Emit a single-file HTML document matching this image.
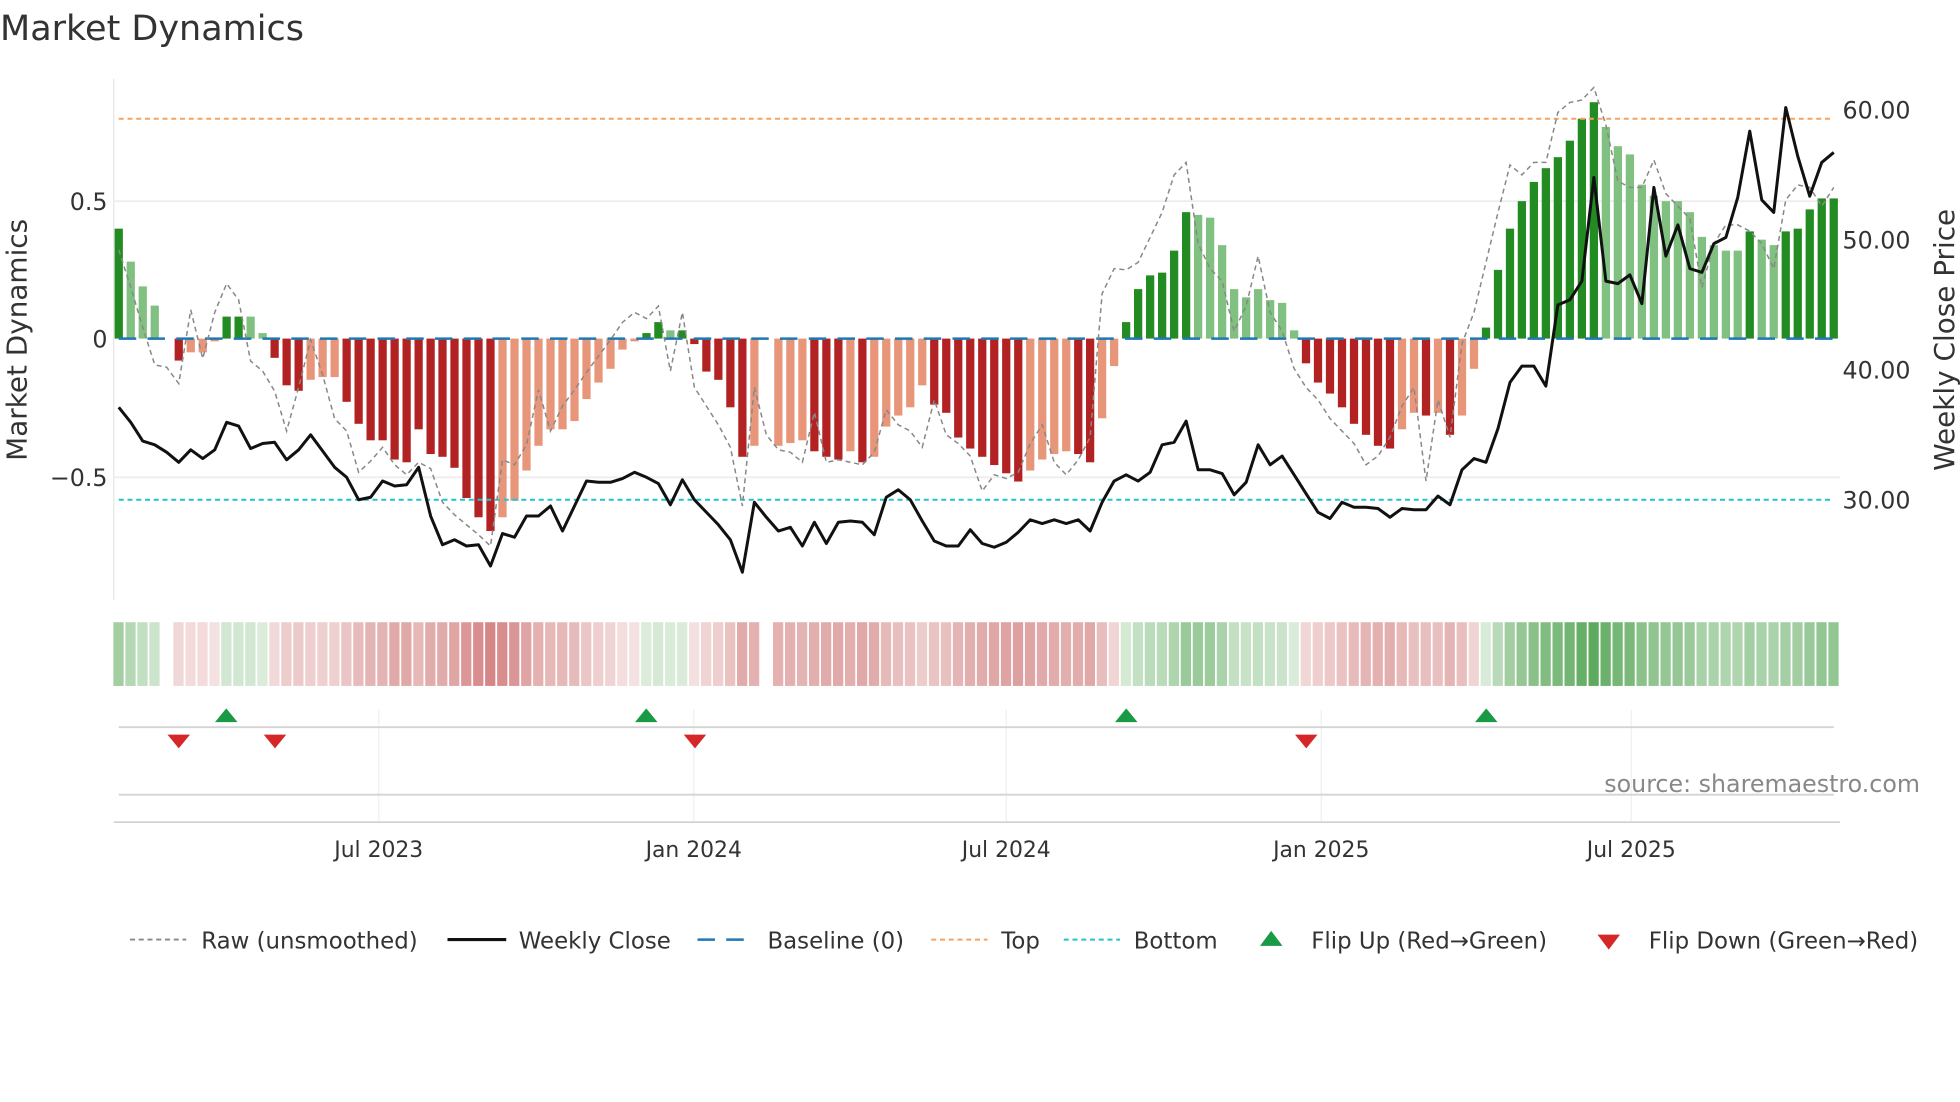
<!DOCTYPE html>
<html><head><meta charset="utf-8"><style>
html,body{margin:0;padding:0;background:#fff;}
svg{display:block;font-family:"DejaVu Sans","Liberation Sans",sans-serif;}
</style></head><body>
<svg id="s" width="1960" height="1102" viewBox="0 0 1568 882" preserveAspectRatio="none" xmlns="http://www.w3.org/2000/svg">
<text x="0" y="32" font-size="28" fill="#333">Market Dynamics</text>
<line x1="91" y1="63" x2="91" y2="480" stroke="#e6e6e6" stroke-width="1"/>
<line x1="91" y1="161" x2="1472" y2="161" stroke="#eeeeee" stroke-width="1.5"/>
<line x1="91" y1="382" x2="1472" y2="382" stroke="#eeeeee" stroke-width="1.5"/>
<g id="bars"></g>
<line x1="95" y1="95" x2="1467" y2="95" stroke="#f4a460" stroke-width="1.6" stroke-dasharray="4,3"/>
<line x1="95" y1="400" x2="1467" y2="400" stroke="#20c4cc" stroke-width="1.6" stroke-dasharray="4,3"/>
<line x1="95" y1="271" x2="1467" y2="271" stroke="#1f77b4" stroke-width="2" stroke-dasharray="14,9"/>
<polyline id="raw" fill="none" stroke="#888" stroke-width="1.2" stroke-dasharray="4,3"/>
<polyline id="close" fill="none" stroke="#111" stroke-width="2.4" stroke-linejoin="round"/>
<g font-size="19" fill="#333" text-anchor="end">
<text x="86" y="168">0.5</text><text x="86" y="278">0</text><text x="86" y="389">−0.5</text>
</g>
<g font-size="19" fill="#333">
<text x="1474" y="95">60.00</text><text x="1474" y="199">50.00</text><text x="1474" y="303">40.00</text><text x="1474" y="407">30.00</text>
</g>
<text transform="translate(21,272) rotate(-90)" font-size="22.3" fill="#333" text-anchor="middle">Market Dynamics</text>
<text transform="translate(1563,272) rotate(-90)" font-size="22.3" fill="#333" text-anchor="middle">Weekly Close Price</text>
<g id="strip"></g>
<g stroke="#eef0f2" stroke-width="1">
<line x1="303" y1="568" x2="303" y2="658"/><line x1="555" y1="568" x2="555" y2="658"/><line x1="805" y1="568" x2="805" y2="658"/><line x1="1057" y1="568" x2="1057" y2="658"/><line x1="1305" y1="568" x2="1305" y2="658"/>
</g>
<line x1="95" y1="582" x2="1467" y2="582" stroke="#d4d4d4" stroke-width="1.5"/>
<line x1="95" y1="636" x2="1467" y2="636" stroke="#d4d4d4" stroke-width="1.5"/>
<line x1="91" y1="658" x2="1472" y2="658" stroke="#cccccc" stroke-width="1.2"/>
<g fill="#1a9a45">
<polygon points="172,578 190,578 181,567"/><polygon points="508,578 526,578 517,567"/><polygon points="892,578 910,578 901,567"/><polygon points="1180,578 1198,578 1189,567"/>
</g>
<g fill="#d62728">
<polygon points="134,588 152,588 143,599"/><polygon points="211,588 229,588 220,599"/><polygon points="547,588 565,588 556,599"/><polygon points="1036,588 1054,588 1045,599"/>
</g>
<text x="1536" y="634" font-size="19" fill="#888" text-anchor="end">source: sharemaestro.com</text>
<g font-size="17.5" fill="#333" text-anchor="middle">
<text x="303" y="686">Jul 2023</text><text x="555" y="686">Jan 2024</text><text x="805" y="686">Jul 2024</text><text x="1057" y="686">Jan 2025</text><text x="1305" y="686">Jul 2025</text>
</g>
<g font-size="18.3" fill="#333">
<line x1="104" y1="752" x2="149" y2="752" stroke="#888" stroke-width="1.5" stroke-dasharray="4,3"/>
<text x="161" y="759">Raw (unsmoothed)</text>
<line x1="358" y1="752" x2="405" y2="752" stroke="#111" stroke-width="2.5"/>
<text x="415" y="759">Weekly Close</text>
<line x1="558" y1="752" x2="603" y2="752" stroke="#1f77b4" stroke-width="2" stroke-dasharray="14,9"/>
<text x="614" y="759">Baseline (0)</text>
<line x1="745" y1="752" x2="790" y2="752" stroke="#f4a460" stroke-width="1.6" stroke-dasharray="4,3"/>
<text x="801" y="759">Top</text>
<line x1="851" y1="752" x2="896" y2="752" stroke="#20c4cc" stroke-width="1.6" stroke-dasharray="4,3"/>
<text x="907" y="759">Bottom</text>
<polygon points="1008,757 1026,757 1017,745" fill="#1a9a45"/>
<text x="1049" y="759">Flip Up (Red→Green)</text>
<polygon points="1278,748 1296,748 1287,760" fill="#d62728"/>
<text x="1319" y="759">Flip Down (Green→Red)</text>
</g>
</svg>
<script>
(function(){
var d="D.40 L.28 L.19 L.12 N0 R-.08 S-.05 S-.05 S-.01 D.08 D.08 L.08 L.02 R-.07 R-.17 R-.19 S-.15 S-.14 S-.14 R-.23 R-.31 R-.37 R-.37 R-.44 R-.45 R-.33 R-.42 R-.43 R-.47 R-.58 R-.65 R-.70 S-.65 S-.59 S-.48 S-.39 S-.33 S-.33 S-.30 S-.22 S-.16 S-.11 S-.04 S-.01 D.02 D.06 L.03 D.03 R-.02 R-.12 R-.15 R-.25 R-.43 S-.39 N0 S-.39 S-.38 S-.37 R-.41 R-.43 R-.44 S-.41 R-.45 S-.43 S-.32 S-.28 S-.25 S-.17 R-.24 R-.27 R-.36 R-.40 R-.43 R-.46 R-.49 R-.52 S-.48 S-.44 S-.42 S-.41 R-.42 R-.45 S-.29 S-.10 D.06 D.18 D.23 D.24 D.32 D.46 L.45 L.44 L.34 L.18 L.15 L.18 L.14 L.13 L.03 R-.09 R-.16 R-.20 R-.25 R-.31 R-.35 R-.39 R-.40 S-.33 S-.27 R-.28 S-.27 R-.35 S-.28 S-.11 D.04 D.25 D.40 D.50 D.57 D.62 D.66 D.72 D.80 D.86 L.77 L.70 L.67 L.56 L.52 L.50 L.50 L.46 L.37 L.34 L.32 L.32 D.39 L.36 L.34 D.39 D.40 D.47 D.51 D.51".split(" ");
var col={D:"#228b22",L:"#80c080",R:"#b22222",S:"#e8967a",N:"#fff"};
var n=d.length,x0=95,x1=1467,st=(x1-x0)/(n-1),b="",s="";
for(var i=0;i<n;i++){var c=d[i][0],v=parseFloat(d[i].slice(1)),x=x0+i*st;
var y=271-v*220,yt=Math.min(y,271),h=Math.abs(y-271);
if(c!="N")b+='<rect x="'+(x-3.3).toFixed(1)+'" y="'+yt.toFixed(1)+'" width="6.6" height="'+h.toFixed(1)+'" fill="'+col[c]+'"/>';
if(c!="N"){var a=Math.min(1,0.2+Math.abs(v)*0.9);var f=v>=0?"rgba(34,139,34,"+(a*0.75)+")":"rgba(178,34,34,"+(a*0.65)+")";
s+='<rect x="'+(x-4.3).toFixed(1)+'" y="498" width="8.2" height="51" fill="'+f+'"/>';}}
document.getElementById("bars").innerHTML=b;document.getElementById("strip").innerHTML=s;
var raw=[200,230,262,292,294,307,248,287,250,227,240,289,297,313,345,310,272,300,335,345,378,369,358,372,380,370,375,402,412,420,428,437,368,372,356,312,345,325,312,298,285,272,258,250,255,245,297,250,310,325,340,358,405,310,348,360,362,370,330,370,368,370,372,362,328,340,345,358,320,348,355,365,393,380,383,378,355,340,370,380,368,350,235,215,216,210,190,170,140,130,195,215,225,265,245,205,250,265,295,310,320,335,345,355,372,365,350,325,310,385,320,350,275,250,210,170,132,140,130,130,90,82,80,70,100,145,150,150,128,155,165,175,230,195,180,180,185,195,215,160,148,150,165,150];
var cl=[326,338,353,356,362,370,360,367,360,338,341,359,355,354,368,360,348,361,374,382,400,398,385,389,388,374,413,436,432,437,436,453,427,430,413,413,405,425,405,385,386,386,383,378,382,387,404,384,400,410,420,432,458,402,414,425,422,437,418,435,418,417,418,428,398,392,400,417,433,437,437,424,435,438,434,426,416,419,416,419,416,425,402,385,380,385,378,356,354,337,376,376,379,396,386,356,372,365,380,395,410,415,402,406,406,407,414,407,408,408,397,404,376,367,370,343,306,293,293,309,244,240,225,142,225,227,220,243,150,205,180,215,218,195,190,158,105,160,170,86,125,157,130,122];
function pts(a){var m=a.length,st2=(x1-x0)/(m-1),p=[];for(var i=0;i<m;i++)p.push((x0+i*st2).toFixed(1)+","+a[i]);return p.join(" ");}
document.getElementById("raw").setAttribute("points",pts(raw));
document.getElementById("close").setAttribute("points",pts(cl));
})();
</script>
</body></html>
